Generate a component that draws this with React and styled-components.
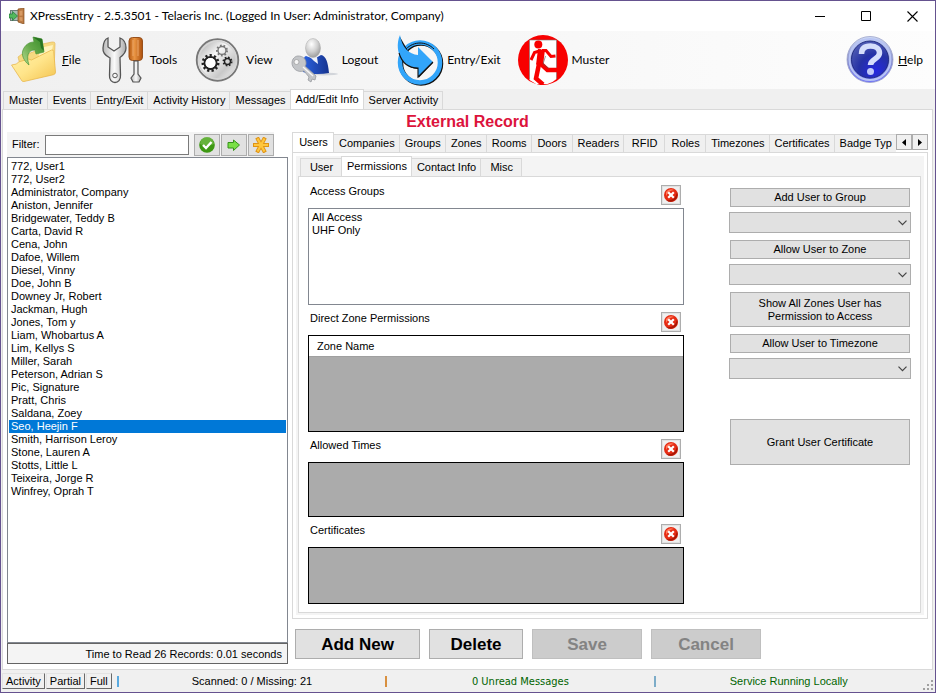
import { useState } from "react";
import styled, { createGlobalStyle, css } from "styled-components";

const MAIN_TABS = ["Muster", "Events", "Entry/Exit", "Activity History", "Messages", "Add/Edit Info", "Server Activity"];

const RECORD_TABS = [
  "Users",
  "Companies",
  "Groups",
  "Zones",
  "Rooms",
  "Doors",
  "Readers",
  "RFID",
  "Roles",
  "Timezones",
  "Certificates",
  "Badge Typ",
];

const USER_TABS = ["User", "Permissions", "Contact Info", "Misc"];

const USERS = [
  "772, User1",
  "772, User2",
  "Administrator, Company",
  "Aniston, Jennifer",
  "Bridgewater, Teddy B",
  "Carta, David R",
  "Cena, John",
  "Dafoe, Willem",
  "Diesel, Vinny",
  "Doe, John B",
  "Downey Jr, Robert",
  "Jackman, Hugh",
  "Jones, Tom y",
  "Liam, Whobartus A",
  "Lim, Kellys S",
  "Miller, Sarah",
  "Peterson, Adrian S",
  "Pic, Signature",
  "Pratt, Chris",
  "Saldana, Zoey",
  "Seo, Heejin F",
  "Smith, Harrison Leroy",
  "Stone, Lauren A",
  "Stotts, Little L",
  "Teixeira, Jorge R",
  "Winfrey, Oprah T",
];

export default function App() {
  const [mainTab, setMainTab] = useState("Add/Edit Info");
  const [recordTab, setRecordTab] = useState("Users");
  const [userTab, setUserTab] = useState("Permissions");
  const [selected, setSelected] = useState("Seo, Heejin F");
  const [filter, setFilter] = useState("");

  const shown = USERS.filter((user) => user.toLowerCase().includes(filter.toLowerCase()));

  return (
    <Window>
      <GlobalStyle />
      <TitleBar>
        <AppIcon />
        <Title>XPressEntry - 2.5.3501 - Telaeris Inc. (Logged In User: Administrator, Company)</Title>
        <WindowButton aria-label="Minimize">
          <svg width="11" height="11"><path d="M0 5.5h10" stroke="#000" /></svg>
        </WindowButton>
        <WindowButton aria-label="Maximize">
          <svg width="11" height="11"><path d="M.5 .5h9v9h-9z" fill="none" stroke="#000" /></svg>
        </WindowButton>
        <WindowButton aria-label="Close">
          <svg width="11" height="11"><path d="M.5 .5l10 10M10.5 .5l-10 10" stroke="#000" strokeWidth="1.1" /></svg>
        </WindowButton>
      </TitleBar>

      <Toolbar>
        <ToolButton><FileIcon /><span><u>F</u>ile</span></ToolButton>
        <ToolButton><ToolsIcon />Tools</ToolButton>
        <ToolButton><ViewIcon />View</ToolButton>
        <ToolButton><LogoutIcon />Logout</ToolButton>
        <ToolButton><EntryExitIcon />Entry/Exit</ToolButton>
        <ToolButton><MusterIcon />Muster</ToolButton>
        <HelpButton><HelpIcon /><span><u>H</u>elp</span></HelpButton>
      </Toolbar>

      <MainTabs role="tablist">
        {MAIN_TABS.map((tab) => (
          <Tab key={tab} role="tab" aria-selected={tab === mainTab} $active={tab === mainTab} onClick={() => setMainTab(tab)}>
            {tab}
          </Tab>
        ))}
      </MainTabs>

      <MainPage>
        <RecordTitle>External Record</RecordTitle>
        <Columns>
          <Sidebar>
            <FilterBar>
              <label htmlFor="filter">Filter:</label>
              <FilterInput id="filter" value={filter} onChange={(e) => setFilter(e.target.value)} />
              <FilterButtons>
                <FilterButton aria-label="Apply filter"><CheckIcon /></FilterButton>
                <FilterButton aria-label="Next"><ArrowIcon /></FilterButton>
                <FilterButton aria-label="Show all"><StarIcon /></FilterButton>
              </FilterButtons>
            </FilterBar>
            <UserList role="listbox" aria-label="Users">
              {shown.map((user) => (
                <UserItem
                  key={user}
                  role="option"
                  aria-selected={user === selected}
                  $selected={user === selected}
                  onClick={() => setSelected(user)}
                >
                  {user}
                </UserItem>
              ))}
            </UserList>
            <ReadTime>Time to Read 26 Records: 0.01 seconds</ReadTime>
          </Sidebar>

          <Record>
            <RecordTabRow>
              <RecordTabs role="tablist">
                {RECORD_TABS.map((tab) => (
                  <Tab key={tab} role="tab" aria-selected={tab === recordTab} $active={tab === recordTab} onClick={() => setRecordTab(tab)}>
                    {tab}
                  </Tab>
                ))}
              </RecordTabs>
              <ScrollButton aria-label="Scroll tabs left">
                <svg width="4" height="7"><path d="M4 0v7L0 3.5z" /></svg>
              </ScrollButton>
              <ScrollButton aria-label="Scroll tabs right">
                <svg width="4" height="7"><path d="M0 0v7l4-3.5z" /></svg>
              </ScrollButton>
            </RecordTabRow>
            <RecordPage>
              <UserTabs role="tablist">
                {USER_TABS.map((tab) => (
                  <Tab key={tab} role="tab" aria-selected={tab === userTab} $active={tab === userTab} onClick={() => setUserTab(tab)}>
                    {tab}
                  </Tab>
                ))}
              </UserTabs>
              <Permissions>
                <Lists>
                  <Section title="Access Groups">
                    <GroupList>
                      <li>All Access</li>
                      <li>UHF Only</li>
                    </GroupList>
                  </Section>
                  <Section title="Direct Zone Permissions">
                    <Grid $height="97px">
                      <ZoneTable>
                        <thead>
                          <tr><th>Zone Name</th></tr>
                        </thead>
                      </ZoneTable>
                    </Grid>
                  </Section>
                  <Section title="Allowed Times">
                    <Grid $height="55px" />
                  </Section>
                  <Section title="Certificates">
                    <Grid $height="57px" />
                  </Section>
                </Lists>
                <Actions>
                  <ActionGroup>
                    <ActionButton>Add User to Group</ActionButton>
                    <Dropdown label="Group" />
                  </ActionGroup>
                  <ActionGroup>
                    <ActionButton>Allow User to Zone</ActionButton>
                    <Dropdown label="Zone" />
                  </ActionGroup>
                  <ActionButton $height="35px">
                    Show All Zones User has
                    <br />
                    Permission to Access
                  </ActionButton>
                  <ActionGroup>
                    <ActionButton>Allow User to Timezone</ActionButton>
                    <Dropdown label="Timezone" />
                  </ActionGroup>
                  <GrantButton $height="46px">Grant User Certificate</GrantButton>
                </Actions>
              </Permissions>
            </RecordPage>
            <RecordButtons>
              <RecordButton $width="125px">Add New</RecordButton>
              <RecordButton $width="94px">Delete</RecordButton>
              <RecordButton $width="110px" disabled>Save</RecordButton>
              <RecordButton $width="110px" disabled>Cancel</RecordButton>
            </RecordButtons>
          </Record>
        </Columns>
      </MainPage>

      <StatusBar>
        <StatusButton>Activity</StatusButton>
        <StatusButton>Partial</StatusButton>
        <StatusButton>Full</StatusButton>
        <StatusPanels>
          <StatusPanel $bar="#5aaae0">Scanned: 0 / Missing: 21</StatusPanel>
          <StatusPanel $bar="#d89040" $green $wide>0 Unread Messages</StatusPanel>
          <StatusPanel $bar="#7cacc8" $green>Service Running Locally</StatusPanel>
        </StatusPanels>
        <Grip width="12" height="12" viewBox="0 0 12 12">
          <path d="M8 0h2v2H8zM4 4h2v2H4zM8 4h2v2H8zM0 8h2v2H0zM4 8h2v2H4zM8 8h2v2H8z" fill="#a0a0a0" />
        </Grip>
      </StatusBar>
    </Window>
  );
}

function Section({ title, children }) {
  return (
    <section>
      <SectionHead>
        <SectionTitle>{title}</SectionTitle>
        <DeleteButton aria-label={`Remove from ${title}`}><CrossIcon /></DeleteButton>
      </SectionHead>
      {children}
    </section>
  );
}

function Dropdown({ label }) {
  return (
    <SelectWrapper>
      <Select aria-label={label} />
      <Chevron width="9" height="6" viewBox="0 0 9 6">
        <path d="M.5 .7l4 4 4-4" fill="none" stroke="#444" strokeWidth="1.2" />
      </Chevron>
    </SelectWrapper>
  );
}

function AppIcon() {
  return (
    <svg width="16" height="16" viewBox="0 0 16 16">
      <path d="M1 2h10v11H1z" fill="#6d7f7a" />
      <path d="M2 3h7v9H2z" fill="#a9bdb5" />
      <path d="M9 1l6-1v16l-6-2z" fill="#b97943" stroke="#87501f" strokeWidth=".7" />
      <path d="M10.500 3l3-.5v5l-3 .2zM10.500 9l3 .2v4l-3-.6z" fill="#d79a63" />
      <path d="M0 6h3.500V3.500L8.500 8l-5 4.500V10H0z" fill="#52b95d" stroke="#207638" strokeWidth=".7" />
    </svg>
  );
}

function FileIcon() {
  return (
    <svg width="48" height="48" viewBox="0 0 48 48">
      <defs>
        <linearGradient id="folder" x1="0" y1="0" x2="1" y2="1">
          <stop offset="0" stopColor="#fff2ae" />
          <stop offset=".5" stopColor="#ffe58b" />
          <stop offset="1" stopColor="#f3c34f" />
        </linearGradient>
        <linearGradient id="leaf" x1="0" y1="1" x2="1" y2="0">
          <stop offset="0" stopColor="#b8dc92" />
          <stop offset=".5" stopColor="#64a949" />
          <stop offset="1" stopColor="#388b2a" />
        </linearGradient>
      </defs>
      <path d="M8 21l4-3 3 1 13-5V9l14-3q3-.5 3 1.500l-1 30-30 6z" fill="#f6d980" stroke="#e5b957" strokeWidth=".7" />
      <path d="M30 12l13-3-2 11-13 5z" fill="#fff3bd" />
      <path
        d="M1.500 29l5-1 2-2 10-3 3 1 20-10q2-.5 2.200 1.500L45.500 36q.2 2-2 2.700L14 45.500q-2 .5-3-2z"
        fill="url(#folder)" stroke="#e9b84c" strokeWidth=".8"
      />
      <path
        d="M19 29c-5-4-8-10-6-15 2-5 6-8 11-8l-1-5 9 2 2 13-8 2-1-4c-7 0-9 6-6 15z"
        fill="url(#leaf)" stroke="#4e9638" strokeWidth=".7"
      />
      <path d="M23 1l9 2 2 12-3-3-1-6z" fill="#287421" />
    </svg>
  );
}

function ToolsIcon() {
  return (
    <svg width="48" height="48" viewBox="0 0 48 48">
      <defs>
        <linearGradient id="steel">
          <stop offset="0" stopColor="#b9b9b9" />
          <stop offset=".5" stopColor="#fafafa" />
          <stop offset="1" stopColor="#aaa" />
        </linearGradient>
        <linearGradient id="handle">
          <stop offset="0" stopColor="#b65b13" />
          <stop offset=".4" stopColor="#e99544" />
          <stop offset="1" stopColor="#ad500d" />
        </linearGradient>
      </defs>
      <path
        d="M10 2v9l6 4 6-4V2c4 1.500 6 6 6 10 0 4-2.500 7-6 9.500L22.500 39c.4 5-2.500 7.500-5.500 7.500S11 44 11.500 39L12 22c-5-2.500-7.500-5.500-7-10C5.300 7 7 3 10 2z"
        fill="url(#steel)" stroke="#555" strokeWidth="1.300"
      />
      <circle cx="17" cy="39.500" r="2.300" fill="#f5f5f5" stroke="#555" />
      <rect x="31" y="1.500" width="13.500" height="23" rx="3.500" fill="url(#handle)" stroke="#98501c" />
      <path d="M35 4v16M40 4v16" stroke="#f3b176" strokeWidth=".8" />
      <path d="M36 25h4v13l3 4-2 4h-6l-2-4 3-4z" fill="url(#steel)" stroke="#555" strokeWidth="1.200" />
    </svg>
  );
}

function Gear({ cx, cy, r, teeth, color = "#222", width = 3 }) {
  const length = 2 * Math.PI * (r + width / 2);
  return (
    <g fill="none" stroke={color}>
      <circle cx={cx} cy={cy} r={r} strokeWidth={width * 0.7} />
      <circle cx={cx} cy={cy} r={r + width / 2} strokeWidth={width} strokeDasharray={`${length / teeth / 2} ${length / teeth / 2}`} />
    </g>
  );
}

function ViewIcon() {
  return (
    <svg width="48" height="48" viewBox="0 0 48 48">
      <defs>
        <linearGradient id="chrome" x1="0" y1="0" x2="1" y2="1">
          <stop offset="0" stopColor="#999" />
          <stop offset=".4" stopColor="#f7f7f7" />
          <stop offset=".7" stopColor="#c8c8c8" />
          <stop offset="1" stopColor="#fff" />
        </linearGradient>
      </defs>
      <circle cx="23.500" cy="24" r="20.800" fill="url(#chrome)" stroke="#777" strokeWidth="1.800" />
      <circle cx="23.500" cy="24" r="18.800" fill="none" stroke="#d6d6d6" strokeWidth="1.500" />
      <Gear cx={16.5} cy={27} r={6} teeth={11} />
      <Gear cx={28} cy={14.500} r={4} teeth={9} color="#777" width={2} />
      <Gear cx={33.500} cy={25.500} r={3} teeth={8} width={2} />
      <circle cx="16.500" cy="27" r="5" fill="#fff" />
    </svg>
  );
}

function LogoutIcon() {
  return (
    <svg width="48" height="48" viewBox="0 0 48 48">
      <defs>
        <radialGradient id="head" cx=".4" cy=".3" r=".8">
          <stop offset="0" stopColor="#fff" />
          <stop offset=".5" stopColor="#d0d0d0" />
          <stop offset="1" stopColor="#8d8d8d" />
        </radialGradient>
        <linearGradient id="suit">
          <stop offset="0" stopColor="#2b62df" />
          <stop offset="1" stopColor="#16338f" />
        </linearGradient>
      </defs>
      <ellipse cx="34" cy="38" rx="14" ry="1.500" fill="#d2d5da" />
      <path d="M13 36c0-10 0-15 3-16l8 3 7-4c5 1 7 7 8 18-8 1.500-18 1.500-26-1z" fill="url(#suit)" />
      <path d="M19 20l5 2 3-1 1 7-4-3z" fill="#eef2fb" />
      <ellipse cx="23" cy="12" rx="7.500" ry="9.500" fill="url(#head)" stroke="#aaa" strokeWidth=".5" />
      <path
        d="M8 20c5 0 8 3 8 7 0 1 0 2-1 3l11 10-1 4-3-1-1 3-3-2 1-3-5-6c-7 2-12-3-12-8 0-4 3-7 6-7z"
        fill="#c3c5c8" stroke="#999ca1" strokeWidth=".8"
      />
      <circle cx="6.500" cy="26" r="2.500" fill="#f5f5f5" stroke="#999" strokeWidth=".7" />
      <path d="M13 31l10 9" stroke="#f7f7f7" strokeWidth="1.300" />
    </svg>
  );
}

function EntryExitIcon() {
  return (
    <svg width="48" height="48" viewBox="0 0 48 48" overflow="visible">
      <circle cx="26" cy="27.500" r="20" fill="none" stroke="#111" strokeWidth="4.500" />
      <circle cx="25" cy="26.500" r="20" fill="none" stroke="#32a5fa" strokeWidth="4.500" />
      <path d="M5 1C4 18 9 33 23.500 33v9L38 27l-1-1-14 14v-8" fill="#111" />
      <path d="M5-1C1 8 3 17 6 22c4 7 10 10 17 10v9l15-15-15-15v8C14 18 7 12 5-1z" fill="#32a5fa" />
      <path d="M11 13c8-8 20-8 28 0" fill="none" stroke="#111" strokeWidth="1" />
      <path d="M4 17c3 10 9 15 19 15v9l15-15" fill="none" stroke="#111" strokeWidth="1.100" />
    </svg>
  );
}

function MusterIcon() {
  return (
    <svg width="50" height="50" viewBox="0 0 50 50">
      <circle cx="25" cy="25" r="25" fill="#f80000" />
      <path d="M11.500 5h27v39l-4 3-5 2H18l-6.500-4z" fill="#fff" />
      <path d="M11.500 44V5h27v39" fill="none" stroke="#777" strokeWidth=".6" />
      <circle cx="20.300" cy="9.500" r="4" fill="#f80000" />
      <g fill="none" stroke="#f80000">
        <path d="M23.500 14.500L21.500 30" strokeWidth="7" />
        <path d="M23 15.500l-6.500 2-3.500 7.500" strokeWidth="3" />
        <path d="M24 15.500h4l5 6 4.500-.5" strokeWidth="3" />
        <path d="M22 28l7.500 7h13" strokeWidth="4.500" />
        <path d="M21 29l-3 14.500 7 6" strokeWidth="4.500" />
      </g>
      <path d="M27.500 21l-2.500 8 6 4.500" fill="none" stroke="#555" strokeWidth=".6" />
    </svg>
  );
}

function HelpIcon() {
  return (
    <svg width="48" height="48" viewBox="0 0 48 48">
      <defs>
        <linearGradient id="ring" x1="0" y1="0" x2="0" y2="1">
          <stop offset="0" stopColor="#cfdcf6" />
          <stop offset=".5" stopColor="#8990cd" />
          <stop offset="1" stopColor="#7074fb" />
        </linearGradient>
        <radialGradient id="ball" cx=".65" cy=".8" r=".9">
          <stop offset="0" stopColor="#2528df" />
          <stop offset=".5" stopColor="#2531a5" />
          <stop offset="1" stopColor="#5864b5" />
        </radialGradient>
      </defs>
      <circle cx="24" cy="23.500" r="23" fill="url(#ring)" stroke="#9ca2ca" strokeWidth=".8" />
      <circle cx="24" cy="23.500" r="20.500" fill="none" stroke="#b8c4f4" strokeWidth="2" />
      <circle cx="24" cy="23.500" r="18.500" fill="url(#ball)" stroke="#202b83" />
      <path d="M15.500 18c0-6 4-8 9-8 6 0 9 3 9 7 0 6-9 6-9 12" fill="none" stroke="#d5ddfb" strokeWidth="5.500" />
      <circle cx="24.500" cy="35.500" r="3.500" fill="#c2cafa" />
    </svg>
  );
}

function CheckIcon() {
  return (
    <svg width="16" height="16" viewBox="0 0 16 16">
      <circle cx="8" cy="8" r="7.800" fill="#3d9813" />
      <path d="M1 7a7 7 0 0 1 14 0c-5 2-9 2-14 0z" fill="#76bd4d" opacity=".7" />
      <path d="M4 8l3 3 5.500-6" fill="none" stroke="#fff" strokeWidth="2.400" />
    </svg>
  );
}

function ArrowIcon() {
  return (
    <svg width="16" height="16" viewBox="0 0 16 16">
      <path d="M2 5.500h5.500V3L13.500 8l-6 5.500V11H2z" fill="#79e045" stroke="#36921b" />
    </svg>
  );
}

function StarIcon() {
  return (
    <svg width="16" height="16" viewBox="0 0 16 16">
      <path d="M0 8h16M4 .5l8 15M12 .5l-8 15" stroke="#df9416" strokeWidth="4" />
      <path d="M1 8h14M4.500 1.500l7 13M11.500 1.500l-7 13" stroke="#ffc63d" strokeWidth="2.200" />
    </svg>
  );
}

function CrossIcon() {
  return (
    <svg width="16" height="16" viewBox="0 0 16 16">
      <rect width="16" height="16" fill="#f0f0f0" />
      <circle cx="8" cy="8" r="7" fill="#e52b13" />
      <path d="M14 5a7 7 0 0 1-11 8c6 1 10-2 11-8z" fill="#a91705" />
      <path d="M3 5a6 6 0 0 1 8-2C8 3 5 5 3 9z" fill="#ff7658" />
      <path d="M5.200 5.200l5.600 5.600M10.800 5.200l-5.600 5.600" stroke="#fff" strokeWidth="2.200" />
    </svg>
  );
}

const GlobalStyle = createGlobalStyle`
  * {
    box-sizing: border-box;
  }
  body {
    margin: 0;
    font: 11px/13px "Liberation Sans", Arial, sans-serif;
    color: #000;
  }
  button, input, select {
    font: inherit;
    color: inherit;
    margin: 0;
    padding: 0;
    border-radius: 0;
  }
  svg {
    display: block;
    flex-shrink: 0;
  }
  ul {
    list-style: none;
    margin: 0;
    padding: 0;
  }
`;

const Window = styled.div`
  display: flex;
  flex-direction: column;
  min-height: 100vh;
  border: 1px solid #65528f;
  background: #f0f0f0;
`;

const TitleBar = styled.header`
  display: flex;
  align-items: center;
  height: 30px;
  padding-left: 8px;
  background: #fff;
`;

const Title = styled.h1`
  flex: 1;
  margin: 0 0 0 5px;
  font: 400 12px/16px Lato, "Segoe UI", sans-serif;
  white-space: nowrap;
`;

const WindowButton = styled.button`
  display: flex;
  align-items: center;
  justify-content: center;
  width: 46px;
  height: 30px;
  border: 0;
  background: none;
`;

const Toolbar = styled.nav`
  display: flex;
  align-items: center;
  gap: 17px;
  height: 58px;
  padding: 0 12px 0 9px;
  background: linear-gradient(90deg, #f0f0f0, #fdfdfd);
`;

const ToolButton = styled.button`
  display: flex;
  align-items: center;
  gap: 4px;
  height: 52px;
  border: 0;
  background: none;
  font: 400 12px/16px Lato, "Segoe UI", sans-serif;
`;

const HelpButton = styled(ToolButton)`
  margin-left: auto;
`;

const tabStrip = css`
  display: flex;
  align-items: flex-end;
  min-width: 0;
  height: 20px;
`;

const MainTabs = styled.div`
  ${tabStrip}
  padding-left: 2px;
`;

const Tab = styled.button`
  flex: none;
  min-width: 42px;
  height: ${({ $active }) => ($active ? 20 : 18)}px;
  margin-right: -1px;
  padding: 0 4px 0 5px;
  border: 1px solid #d9d9d9;
  border-bottom: 0;
  background: ${({ $active }) => ($active ? "#fff" : "#f0f0f0")};
  white-space: nowrap;
`;

const MainPage = styled.main`
  flex: 1;
  display: flex;
  flex-direction: column;
  margin: 0 2px 0 1px;
  padding: 0 4px 5px 4px;
  border: 1px solid #d9d9d9;
  background: #fff;
`;

const RecordTitle = styled.h2`
  margin: 0;
  padding-top: 2px;
  color: #dc143c;
  font-size: 16px;
  font-weight: 700;
  line-height: 20px;
  text-align: center;
`;

const Columns = styled.div`
  flex: 1;
  display: grid;
  grid-template-columns: minmax(240px, 281px) minmax(0, 1fr);
  gap: 4px;
`;

const Sidebar = styled.aside`
  display: flex;
  flex-direction: column;
`;

const FilterBar = styled.div`
  display: flex;
  align-items: center;
  gap: 5px;
  height: 25px;
  margin-right: 14px;
  padding-left: 5px;
  background: #f4f4f4;

  label {
    width: 28px;
  }
`;

const FilterInput = styled.input`
  flex: 1;
  min-width: 0;
  height: 20px;
  padding: 0 3px;
  border: 1px solid #7a7a7a;
  background: #fff;
`;

const FilterButtons = styled.div`
  display: flex;
  gap: 1px;
`;

const FilterButton = styled.button`
  display: flex;
  align-items: center;
  justify-content: center;
  width: 26px;
  height: 22px;
  border: 1px solid #adadad;
  background: #e1e1e1;
`;

const UserList = styled.ul`
  flex: 1;
  padding: 2px 1px;
  border: 1px solid #828790;
`;

const UserItem = styled.li`
  padding-left: 2px;
  line-height: 13px;
  cursor: default;
  ${({ $selected }) =>
    $selected &&
    css`
      background: #0078d7;
      color: #fff;
    `}
`;

const ReadTime = styled.div`
  height: 21px;
  padding: 0 5px;
  border: 1px solid #646464;
  background: #f4f4f4;
  line-height: 20px;
  text-align: right;
`;

const Record = styled.div`
  display: flex;
  flex-direction: column;
  min-width: 0;
`;

const RecordTabRow = styled.div`
  display: flex;
  align-items: center;
`;

const RecordTabs = styled.div`
  ${tabStrip}
  flex: 1;
  overflow: hidden;
`;

const ScrollButton = styled.button`
  display: flex;
  align-items: center;
  justify-content: center;
  width: 16px;
  height: 16px;
  border: 1px solid #adadad;
  background: #f0f0f0;
`;

const RecordPage = styled.div`
  flex: 1;
  display: flex;
  flex-direction: column;
  padding: 3px 6px 5px 5px;
  border: 1px solid #d9d9d9;
  background: #f4f4f4;
  box-shadow: inset 0 0 0 3px #fff;
`;

const UserTabs = styled.div`
  ${tabStrip}
  padding-left: 2px;
`;

const Permissions = styled.div`
  flex: 1;
  display: flex;
  gap: 45px;
  padding: 8px 9px;
  border: 1px solid #d9d9d9;
  background: #fff;
`;

const Lists = styled.div`
  flex: 1;
  display: flex;
  flex-direction: column;
  gap: 7px;
  min-width: 0;
`;

const SectionHead = styled.div`
  display: flex;
  align-items: flex-start;
  justify-content: space-between;
  padding: 0 3px 3px 2px;
`;

const SectionTitle = styled.h3`
  margin: 0;
  font-size: 11px;
  font-weight: 400;
  line-height: 13px;
`;

const DeleteButton = styled.button`
  display: flex;
  align-items: center;
  justify-content: center;
  width: 20px;
  height: 20px;
  border: 1px solid #adadad;
  background: #e1e1e1;
`;

const GroupList = styled.ul`
  height: 97px;
  padding: 2px 3px;
  border: 1px solid #828790;
`;

const Grid = styled.div`
  height: ${({ $height }) => $height};
  border: 1px solid #000;
  background: #ababab;
`;

const ZoneTable = styled.table`
  width: 100%;
  border-collapse: collapse;

  th {
    height: 20px;
    padding: 2px 8px 0;
    border-bottom: 1px solid #a0a0a0;
    background: #fff;
    font-weight: 400;
    text-align: left;
  }
`;

const Actions = styled.div`
  display: flex;
  flex-direction: column;
  gap: 7px;
  width: 182px;
  padding-top: 3px;
`;

const ActionGroup = styled.div`
  display: flex;
  flex-direction: column;
  gap: 5px;
`;

const ActionButton = styled.button`
  height: ${({ $height = "19px" }) => $height};
  margin: 0 1px;
  border: 1px solid #adadad;
  background: #e1e1e1;
`;

const GrantButton = styled(ActionButton)`
  margin-top: 33px;
`;

const SelectWrapper = styled.div`
  position: relative;
`;

const Select = styled.select`
  display: block;
  width: 100%;
  height: 21px;
  border: 1px solid #adadad;
  background: #e1e1e1;
  appearance: none;
`;

const Chevron = styled.svg`
  position: absolute;
  top: 8px;
  right: 4px;
  pointer-events: none;
`;

const RecordButtons = styled.div`
  display: flex;
  gap: 9px;
  padding: 10px 3px 5px;
`;

const RecordButton = styled.button`
  width: ${({ $width }) => $width};
  height: 30px;
  border: 1px solid #adadad;
  background: #e1e1e1;
  font-size: 17px;
  font-weight: 700;

  &:disabled {
    border-color: #bfbfbf;
    background: #ccc;
    color: #838383;
  }
`;

const StatusBar = styled.footer`
  display: flex;
  align-items: center;
  gap: 1px;
  height: 22px;
  padding-left: 1px;
`;

const StatusButton = styled.button`
  height: 16px;
  padding: 0 3px;
  border: 1px solid #696969;
  border-top-color: #e3e3e3;
  border-left-color: #e3e3e3;
  background: #f0f0f0;
`;

const StatusPanels = styled.div`
  flex: 1;
  display: flex;
  margin-left: 4px;
`;

const StatusPanel = styled.div`
  flex: 1;
  border-left: 2px solid ${({ $bar }) => $bar};
  color: ${({ $green }) => ($green ? "#006400" : "#000")};
  line-height: 11px;
  text-align: center;
  ${({ $wide }) => $wide && css`font-family: "DejaVu Sans Condensed", "DejaVu Sans", sans-serif;`}
`;

const Grip = styled.svg`
  align-self: flex-end;
`;
